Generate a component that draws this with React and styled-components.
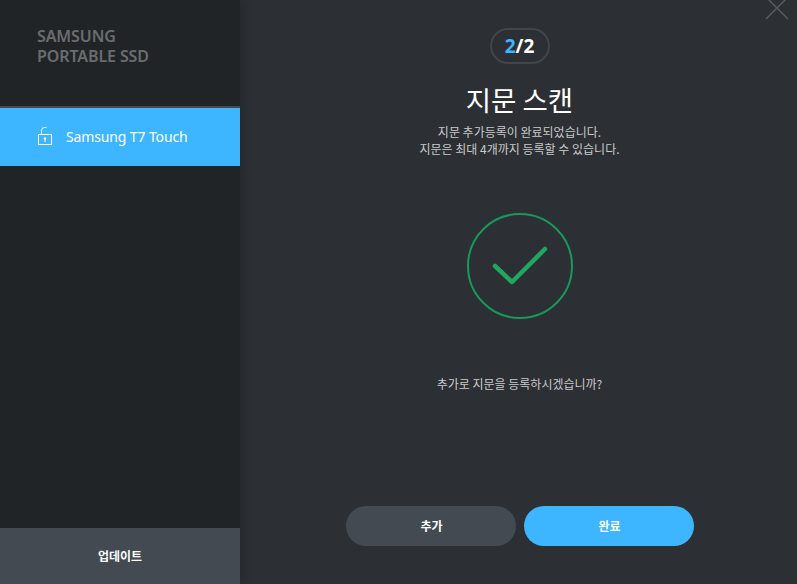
import React from 'react';
import styled, { createGlobalStyle } from 'styled-components';

const GlobalStyle = createGlobalStyle`
  html, body {
    margin: 0;
    padding: 0;
    background: #2c2f33;
  }
  * {
    box-sizing: border-box;
  }
`;

const Page = styled.div`
  position: relative;
  width: 797px;
  height: 584px;
  display: flex;
  overflow: hidden;
  background: #2c2f33;
  font-family: 'Noto Sans', 'Noto Sans CJK KR', sans-serif;
  color: #fff;
`;

const Sidebar = styled.aside`
  width: 240px;
  flex: none;
  display: flex;
  flex-direction: column;
  background: #212427;
  box-shadow: 4px 0 12px rgba(0, 0, 0, 0.12);
  z-index: 1;
`;

const Brand = styled.div`
  height: 106px;
  padding: 26px 0 0 37px;
  font-size: 16px;
  line-height: 20px;
  font-weight: 600;
  color: #696d70;
  letter-spacing: -0.1px;
`;

const DeviceItem = styled.div`
  height: 60px;
  border-top: 2px solid #43494f;
  background: #3db5ff;
  display: flex;
  align-items: center;
  padding: 0 0 2px 37px;
  gap: 13px;
  font-size: 14px;
  letter-spacing: -0.13px;
`;

const Spacer = styled.div`
  flex: 1;
`;

const UpdateBar = styled.div`
  height: 56px;
  background: #434a51;
  display: flex;
  align-items: center;
  justify-content: center;
  padding-bottom: 2px;
  font-family: 'Noto Sans CJK KR', sans-serif;
  font-size: 12px;
  font-weight: 700;
`;

const Main = styled.main`
  flex: 1;
  display: flex;
  flex-direction: column;
  align-items: center;
  padding: 28px 0 0 2px;
`;

const StepBadge = styled.div`
  width: 60px;
  height: 36px;
  border: 2px solid #41464c;
  border-radius: 18px;
  display: flex;
  align-items: center;
  justify-content: center;
  font-size: 19px;
  font-weight: 700;
`;

const StepCurrent = styled.span`
  color: #3db5ff;
`;

const Title = styled.h1`
  margin: 15px 0 0;
  font-family: 'Noto Sans CJK KR', sans-serif;
  font-size: 27.5px;
  line-height: 40px;
  font-weight: 400;
`;

const Description = styled.p`
  margin: 4px 0 0;
  font-family: 'Noto Sans CJK KR', sans-serif;
  font-size: 12px;
  line-height: 17px;
  text-align: center;
  color: #c9cacb;
`;

const CheckIcon = styled.svg`
  margin-top: 56px;
  display: block;
`;

const Question = styled.p`
  margin: 56px 0 0;
  font-family: 'Noto Sans CJK KR', sans-serif;
  font-size: 12px;
  line-height: 17px;
  color: #c9cacb;
`;

const Actions = styled.div`
  margin-top: 114px;
  display: flex;
  gap: 8px;
`;

const ActionButton = styled.button`
  width: 170px;
  height: 40px;
  border: none;
  border-radius: 20px;
  padding: 0 0 2px 2px;
  background: ${(p) => (p.$primary ? '#3db5ff' : '#434a51')};
  color: #fff;
  font-family: 'Noto Sans CJK KR', sans-serif;
  font-size: 12px;
  font-weight: 700;
`;

const CloseIcon = styled.svg`
  position: absolute;
  top: 0;
  right: 8px;
  display: block;
`;

const LockIcon = () => (
  <svg width="16" height="19" viewBox="0 0 16 19" fill="none" stroke="#fff" strokeWidth="1">
    <rect x="1.5" y="7.5" width="13" height="10" />
    <path d="M4.5 7.5V3.5a3 3 0 0 1 3-3h2" />
    <circle cx="8" cy="11.5" r="1.2" fill="#fff" stroke="none" />
    <path d="M8 12v3" />
  </svg>
);

export default function App() {
  return (
    <Page>
      <GlobalStyle />
      <Sidebar>
        <Brand>
          SAMSUNG
          <br />
          PORTABLE SSD
        </Brand>
        <DeviceItem>
          <LockIcon />
          Samsung T7 Touch
        </DeviceItem>
        <Spacer />
        <UpdateBar>업데이트</UpdateBar>
      </Sidebar>
      <Main>
        <StepBadge>
          <StepCurrent>2</StepCurrent>/2
        </StepBadge>
        <Title>지문 스캔</Title>
        <Description>
          지문 추가등록이 완료되었습니다.
          <br />
          지문은 최대 4개까지 등록할 수 있습니다.
        </Description>
        <CheckIcon width="106" height="106" viewBox="0 0 106 106" fill="none">
          <circle cx="53" cy="53" r="52" stroke="#17995c" strokeWidth="2" />
          <path d="M28 64L45 80L78 47" transform="translate(0 -11)" stroke="#1fa65f" strokeWidth="4.5" strokeLinecap="round" strokeLinejoin="round" />
        </CheckIcon>
        <Question>추가로 지문을 등록하시겠습니까?</Question>
        <Actions>
          <ActionButton>추가</ActionButton>
          <ActionButton $primary>완료</ActionButton>
        </Actions>
      </Main>
      <CloseIcon width="24" height="20" viewBox="0 0 24 20" fill="none" stroke="#565b61" strokeWidth="1.5">
        <path d="M1 -3L23 19M23 -3L1 19" />
      </CloseIcon>
    </Page>
  );
}
